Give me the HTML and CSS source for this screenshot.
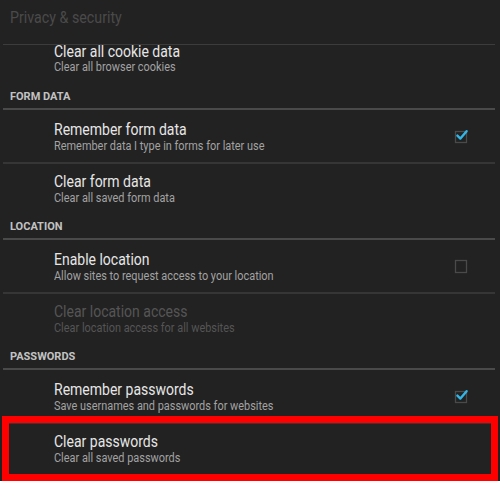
FILE: index.html
```html
<!DOCTYPE html>
<html>
<head>
<meta charset="utf-8">
<link rel="stylesheet" href="styles.css">
</head>
<body>
<div class="screen">
  <div class="appbar"><span class="appbar-title">Privacy &amp; security</span></div>
  <div class="list">
    <div class="row first-visible last">
      <div class="text">
        <div class="title">Clear all cookie data</div>
        <div class="summary">Clear all browser cookies</div>
      </div>
    </div>

    <div class="category">FORM DATA</div>
    <div class="row">
      <div class="text">
        <div class="title">Remember form data</div>
        <div class="summary">Remember data I type in forms for later use</div>
      </div>
      <span class="check on">
        <svg width="16" height="16" viewBox="0 0 16 16"><rect x="1.5" y="3.5" width="11" height="11" fill="none" stroke="#4a4a4a" stroke-width="1.3"/><path d="M3.4 7.6 L6.4 10.6 L12.6 3.2" fill="none" stroke="#33b5e5" stroke-width="2.4" stroke-linecap="round" stroke-linejoin="round"/></svg>
      </span>
    </div>
    <div class="row second last">
      <div class="text">
        <div class="title">Clear form data</div>
        <div class="summary">Clear all saved form data</div>
      </div>
    </div>

    <div class="category">LOCATION</div>
    <div class="row">
      <div class="text">
        <div class="title">Enable location</div>
        <div class="summary">Allow sites to request access to your location</div>
      </div>
      <span class="check">
        <svg width="16" height="16" viewBox="0 0 16 16"><rect x="1.5" y="2.5" width="11" height="12" fill="none" stroke="#4a4a4a" stroke-width="1.3"/></svg>
      </span>
    </div>
    <div class="row second last disabled">
      <div class="text">
        <div class="title">Clear location access</div>
        <div class="summary">Clear location access for all websites</div>
      </div>
    </div>

    <div class="category">PASSWORDS</div>
    <div class="row">
      <div class="text">
        <div class="title">Remember passwords</div>
        <div class="summary">Save usernames and passwords for websites</div>
      </div>
      <span class="check on">
        <svg width="16" height="16" viewBox="0 0 16 16"><rect x="1.5" y="3.5" width="11" height="11" fill="none" stroke="#4a4a4a" stroke-width="1.3"/><path d="M3.4 7.6 L6.4 10.6 L12.6 3.2" fill="none" stroke="#33b5e5" stroke-width="2.4" stroke-linecap="round" stroke-linejoin="round"/></svg>
      </span>
    </div>
    <div class="row second last">
      <div class="text">
        <div class="title">Clear passwords</div>
        <div class="summary">Clear all saved passwords</div>
      </div>
    </div>
  </div>
  <div class="highlight"></div>
</div>
</body>
</html>
```

FILE: styles.css
```css
html, body {
  margin: 0;
  padding: 0;
  background: #222222;
}

body {
  font-family: Roboto, "Noto Sans", "Liberation Sans", sans-serif;
  width: 500px;
  height: 481px;
  overflow: hidden;
}

.screen {
  position: relative;
  width: 500px;
  height: 481px;
  overflow: hidden;
}

.appbar {
  height: 44px;
  line-height: 36px;
  font-size: 16px;
  color: #4a4a4a;
  margin: 0 5px 0 3px;
  padding-left: 7px;
  border-bottom: 1px solid #3c3c3c;
}

.appbar-title {
  display: inline-block;
  transform: scaleX(0.89);
  transform-origin: left center;
}

.list {
  margin: 0 5px 0 3px;
}

.row {
  display: flex;
  align-items: center;
  height: 52px;
  padding-left: 51px;
  border-bottom: 2px solid #363636;
}

.row.last {
  border-bottom: none;
}

.text {
  flex: 1;
  align-self: flex-start;
  padding-top: 10px;
}

.row.second .text {
  padding-top: 8px;
}

.row.first-visible {
  height: 41px;
}

.row.first-visible .text {
  padding-top: 0;
}

.row.first-visible .title {
  line-height: 13px;
}

.row.first-visible .summary {
  margin-top: 2px;
}

.title {
  font-size: 16px;
  line-height: 19px;
  color: #e6e6e6;
  white-space: nowrap;
  transform: scaleX(0.875);
  transform-origin: left center;
}

.summary {
  font-size: 12px;
  line-height: 15px;
  color: #a3a3a3;
  white-space: nowrap;
  transform: scaleX(0.91);
  transform-origin: left center;
}

.row.disabled .title,
.row.disabled .summary {
  color: #555555;
}

.check {
  flex: none;
  width: 16px;
  height: 16px;
  margin-right: 25px;
  display: block;
}

.check svg {
  display: block;
}

.category {
  height: 22px;
  line-height: 22px;
  padding-left: 7px;
  font-size: 11px;
  font-weight: bold;
  color: #c2c2c2;
  border-bottom: 2px solid #4a4a4a;
}

.highlight {
  position: absolute;
  left: 2px;
  top: 416px;
  width: 482px;
  height: 51px;
  border: 7px solid #ff0000;
}
```
